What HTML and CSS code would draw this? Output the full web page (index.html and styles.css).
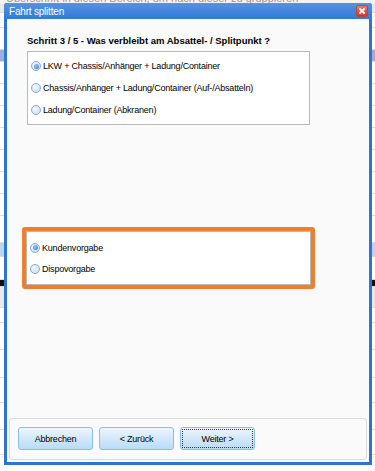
FILE: index.html
```html
<!DOCTYPE html>
<html>

<head>
    <meta charset="utf-8">
    <title>Fahrt splitten</title>
    <link rel="stylesheet" href="styles.css">
</head>

<body>
    <!-- Hintergrund: die Anwendung hinter dem Dialog -->
    <div class="app">
        <div class="app-hint"><span>Überschrift in diesen Bereich, um nach dieser zu gruppieren</span></div>
        <div class="row row-grey" style="height: 9px"></div>
        <div class="row" style="height: 15px"></div>
        <div class="row" style="height: 22px"></div>
        <div class="row row-sel" style="height: 12px"></div>
        <div class="row" style="height: 22px"></div>
        <div class="row" style="height: 22px"></div>
        <div class="row" style="height: 22px"></div>
        <div class="row" style="height: 22px"></div>
        <div class="row" style="height: 22px"></div>
        <div class="row" style="height: 22px"></div>
        <div class="row" style="height: 22px"></div>
        <div class="row" style="height: 27px"></div>
        <div class="row row-light" style="height: 14px"></div>
        <div class="row" style="height: 23px"></div>
        <div class="row row-black" style="height: 7px"></div>
        <div class="row row-grey" style="height: 21px"></div>
        <div class="row" style="height: 15px"></div>
        <div class="row" style="height: 27px"></div>
        <div class="row" style="height: 28px"></div>
        <div class="row" style="height: 25px"></div>
        <div class="row" style="height: 27px"></div>
        <div class="row" style="height: 25px"></div>
        <div class="row grid-row">
            <span></span><span></span><span></span><span></span><span></span>
            <span></span><span></span><span></span><span></span><span></span>
        </div>
    </div>

    <div class="dialog">
        <div class="titlebar">
            <span class="title">Fahrt splitten</span>
            <span class="close">
                <svg width="10" height="10" viewBox="0 0 10 10">
                    <path d="M3 3 L7 7 M7 3 L3 7" stroke="#fff" stroke-width="1.8" stroke-linecap="square" />
                </svg>
            </span>
        </div>
        <div class="client">
            <div class="content">
                <div class="step">Schritt 3 / 5 - Was verbleibt am Absattel- / Splitpunkt ?</div>
                <div class="group">
                    <div class="option"><span class="radio checked"></span>LKW + Chassis/Anhänger + Ladung/Container</div>
                    <div class="option"><span class="radio"></span>Chassis/Anhänger + Ladung/Container (Auf-/Absatteln)</div>
                    <div class="option"><span class="radio"></span>Ladung/Container (Abkranen)</div>
                </div>
                <div class="marker">
                    <div class="group group-small">
                        <div class="option"><span class="radio checked"></span>Kundenvorgabe</div>
                        <div class="option"><span class="radio"></span>Dispovorgabe</div>
                    </div>
                </div>
            </div>
            <div class="footer">
                <button class="btn">Abbrechen</button>
                <button class="btn">&lt; Zurück</button>
                <button class="btn btn-focus">Weiter &gt;</button>
            </div>
        </div>
    </div>
</body>

</html>
```

FILE: styles.css
```css
body {
    margin: 0;
    width: 375px;
    height: 471px;
    overflow: hidden;
    position: relative;
    font-family: "Liberation Sans", Arial, sans-serif;
    font-size: 9px;
    letter-spacing: -0.2px;
    color: #000;
    background: #ffffff;
}

/* ---- Hintergrund ---- */
.app {
    display: flex;
    flex-direction: column;
}

.app-hint {
    height: 4px;
    overflow: hidden;
    background: #f3f3f3;
    color: #9a9a9a;
    font-size: 11px;
    letter-spacing: 0;
    line-height: 4px;
    padding-left: 6px;
}

.app-hint span {
    display: block;
    margin-top: -4px;
}

.row {
    border-bottom: 1px solid #dcdcdc;
    background: #ffffff;
    box-sizing: border-box;
}

.row-grey {
    background: #e9e9e9;
}

.row-sel {
    background: #9aaee6;
}

.row-light {
    background: #b8d5f4;
}

.row-black {
    background: #111;
}

.grid-row {
    height: 8px;
    display: flex;
    border-bottom: none;
}

.grid-row span {
    width: 39.5px;
    flex-shrink: 0;
    border-left: 1px solid #d5d5d5;
    box-sizing: border-box;
}

.grid-row span:first-child {
    width: 23px;
    border-left: none;
}

/* ---- Dialog ---- */
.dialog {
    position: absolute;
    left: 4px;
    top: 3px;
    width: 368px;
    height: 462px;
    background: #2f74d2;
    border-radius: 3px 3px 0 0;
    box-sizing: border-box;
    padding: 0 3px 3px 3px;
    display: flex;
    flex-direction: column;
}

.titlebar {
    height: 16px;
    display: flex;
    align-items: center;
    justify-content: space-between;
    background: linear-gradient(#5393e2, #3479d6);
    margin: 0 -3px;
    padding: 0 3px 0 5px;
    border-radius: 3px 3px 0 0;
}

.title {
    color: #fff;
    font-size: 10px;
}

.close {
    width: 10px;
    height: 10px;
    border-radius: 2px;
    background: linear-gradient(#ee7a6c, #cc3829);
    border: 1px solid #b8453a;
    display: flex;
    margin-right: 1px;
}

.client {
    flex: 1;
    background: #fafafa;
    display: flex;
    flex-direction: column;
}

.content {
    flex: 1;
    padding: 0 0 0 20px;
}

.step {
    font-weight: bold;
    font-size: 9.5px;
    letter-spacing: 0;
    line-height: 12px;
    margin-top: 16px;
    margin-bottom: 4px;
}

.group {
    width: 283px;
    background: #fff;
    border: 1px solid #b9b9b9;
    padding: 3px 0;
    box-sizing: border-box;
}

.option {
    height: 22px;
    display: flex;
    align-items: center;
    padding-left: 3px;
}

.radio {
    width: 10px;
    height: 10px;
    box-sizing: border-box;
    border-radius: 50%;
    border: 1px solid #8aa7cb;
    background: radial-gradient(circle at 40% 35%, #f4f9ff, #c4dbf3);
    margin-right: 2px;
    display: flex;
    align-items: center;
    justify-content: center;
}

.radio.checked::after {
    content: "";
    width: 5px;
    height: 5px;
    border-radius: 50%;
    background: radial-gradient(circle at 40% 35%, #8cc4f7, #2d80d9);
}

.marker {
    margin-top: 102px;
    margin-left: -5px;
    width: 293px;
    border: 4px solid #ef7f2a;
    border-radius: 3px;
    box-sizing: border-box;
}

.group-small {
    width: auto;
    padding: 5px 0;
}

.group-small .option {
    height: 21px;
}

.footer {
    margin: 0 2px 2px 2px;
    height: 42px;
    box-sizing: border-box;
    border: 1px solid #dadada;
    border-radius: 3px;
    padding: 8px 0 0 8px;
    display: flex;
    gap: 6px;
}

.btn {
    width: 75px;
    height: 23px;
    font-family: "Liberation Sans", Arial, sans-serif;
    font-size: 9px;
    letter-spacing: -0.2px;
    color: #000;
    border: 1px solid #8fbce6;
    border-radius: 3px;
    background: linear-gradient(#eef6fd, #d2e8fa 50%, #b9dcf8);
    padding: 0;
}

.btn-focus {
    outline: 1px dotted #333;
    outline-offset: -3px;
}
```
